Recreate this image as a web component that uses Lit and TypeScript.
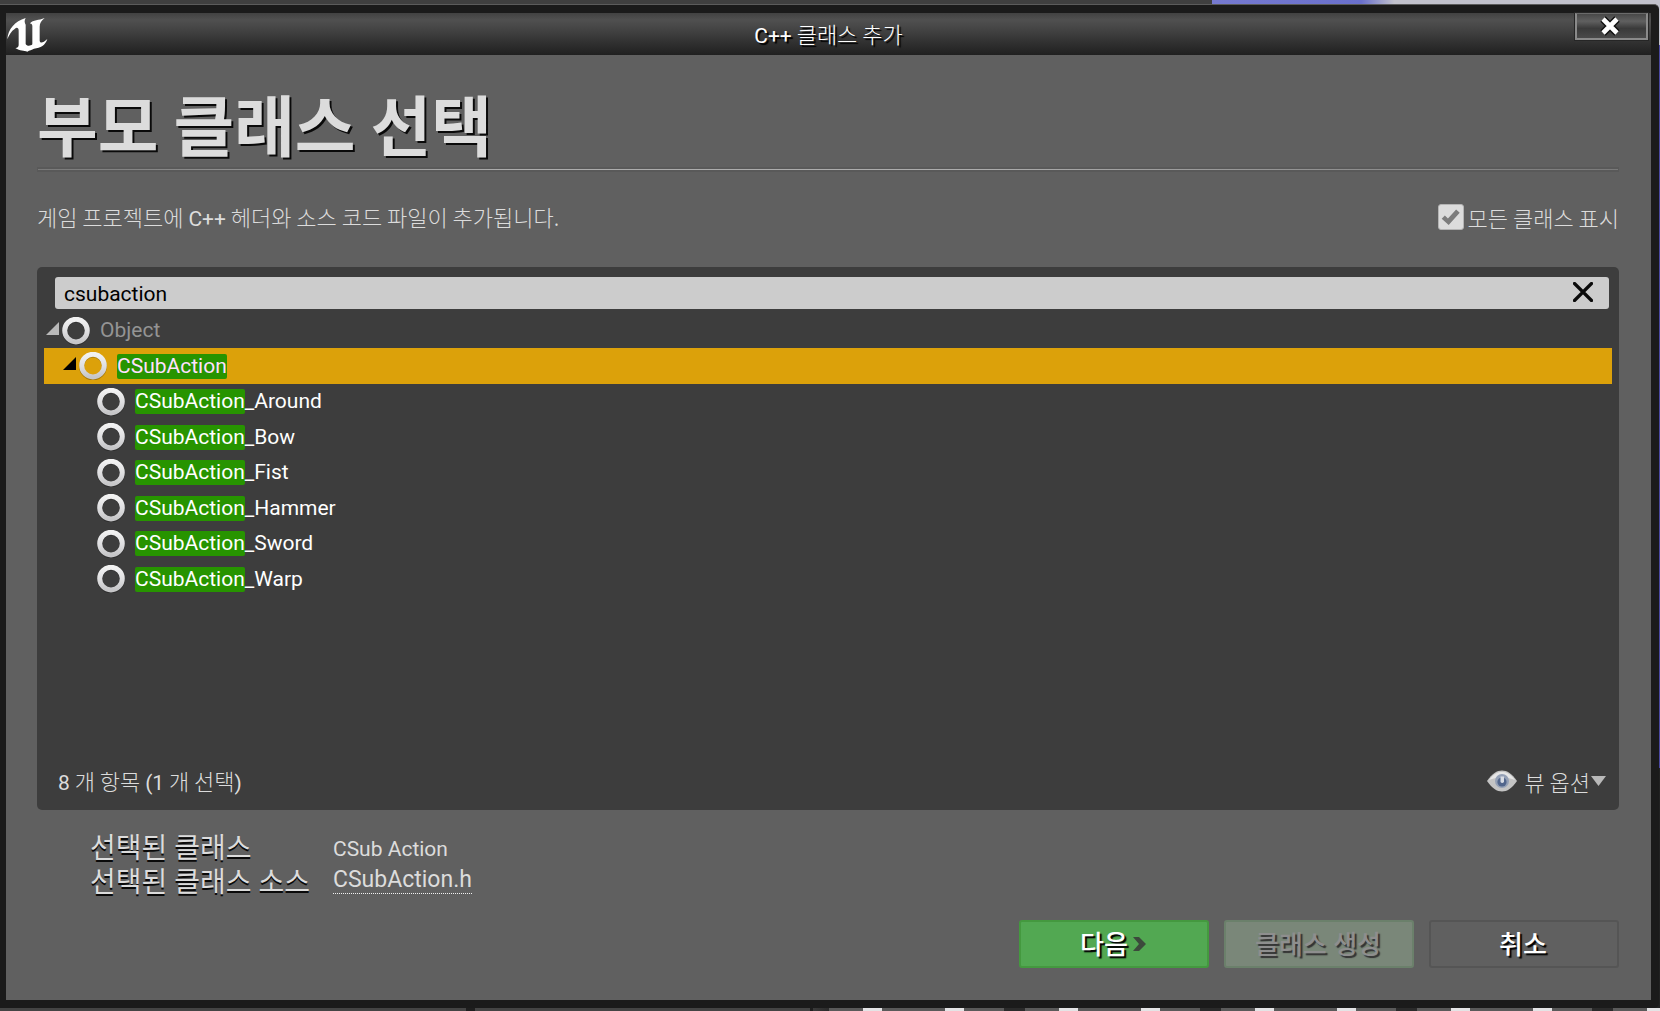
import { LitElement, html, css, svg, nothing } from "lit";
import { customElement, property, state } from "lit/decorators.js";
import { classMap } from "lit/directives/class-map.js";

interface ClassItem {
  name: string;
  depth: number;
  parent: boolean;
}

const CLASSES: ClassItem[] = [
  { name: "Object", depth: 0, parent: true },
  { name: "CSubAction", depth: 1, parent: true },
  { name: "CSubAction_Around", depth: 2, parent: false },
  { name: "CSubAction_Bow", depth: 2, parent: false },
  { name: "CSubAction_Fist", depth: 2, parent: false },
  { name: "CSubAction_Hammer", depth: 2, parent: false },
  { name: "CSubAction_Sword", depth: 2, parent: false },
  { name: "CSubAction_Warp", depth: 2, parent: false },
];

const ringIcon = html`<svg class="ring" viewBox="0 0 28 28" aria-hidden="true">
  ${svg`
    <defs>
      <linearGradient id="g" x1="0" y1="0" x2="0" y2="1">
        <stop offset="0" stop-color="#f2f2f2"></stop>
        <stop offset="0.55" stop-color="#dedee0"></stop>
        <stop offset="1" stop-color="#c6c6c8"></stop>
      </linearGradient>
    </defs>
    <circle cx="14" cy="14.5" r="11.4" fill="none" stroke="#000" stroke-opacity="0.25" stroke-width="5"></circle>
    <circle cx="14" cy="13.6" r="11.3" fill="none" stroke="url(#g)" stroke-width="5"></circle>
  `}
</svg>`;

@customElement("class-row")
export class ClassRow extends LitElement {
  @property({ attribute: false }) item!: ClassItem;
  @property() query = "";
  @property({ type: Boolean }) selected = false;

  static styles = css`
    :host {
      display: block;
      color: #fff;
    }
    .row {
      display: flex;
      align-items: center;
      height: 100%;
      padding-left: 2px;
    }
    .row.selected {
      background: #dca10a;
      color: #ffe0ff;
    }
    .row.muted {
      color: #949494;
    }
    .depth1 {
      padding-left: 19px;
    }
    .depth2 {
      padding-left: 37px;
    }
    .toggle {
      display: flex;
      width: 13px;
      height: 28px;
      padding: 5px 0 0;
      margin-right: 3px;
      border: 0;
      background: none;
      box-sizing: border-box;
      flex: none;
    }
    .toggle.empty {
      visibility: hidden;
    }
    .arrow {
      display: block;
      width: 13px;
      height: 13px;
      fill: #b9b9b9;
    }
    .selected .arrow {
      fill: #000;
    }
    .ring {
      width: 28px;
      height: 28px;
      flex: none;
    }
    .name {
      margin-left: 10px;
      line-height: 25px;
      white-space: nowrap;
    }
    mark {
      display: inline-block;
      background: #279400;
      color: inherit;
      border-radius: 2px;
    }
  `;

  private label() {
    const { name } = this.item;
    const at = name.toLowerCase().indexOf(this.query.toLowerCase());
    if (!this.query || at < 0) return name;
    const end = at + this.query.length;
    return html`${name.slice(0, at)}<mark>${name.slice(at, end)}</mark>${name.slice(end)}`;
  }

  render() {
    const { depth, parent } = this.item;
    return html`<div
      class=${classMap({
        row: true,
        selected: this.selected,
        muted: depth === 0,
        [`depth${depth}`]: true,
      })}
    >
      ${parent
        ? html`<button class="toggle" aria-label="접기">
            <svg class="arrow" viewBox="0 0 13 13"><path d="M13 0V13H0z"></path></svg>
          </button>`
        : html`<span class="toggle empty"></span>`}
      ${ringIcon}
      <span class="name">${this.label()}</span>
    </div>`;
  }
}

@customElement("app-root")
export class AppRoot extends LitElement {
  @state() private query = "csubaction";
  @state() private selected = "CSubAction";

  static styles = css`
    :host {
      display: flex;
      flex-direction: column;
      min-height: 100vh;
      box-sizing: border-box;
      padding: 4px 1px 3px 0;
      font-family: Roboto, "Noto Sans CJK KR", sans-serif;
      font-size: 21px;
      font-weight: 400;
      color: #dcdcdc;
      background:
        linear-gradient(90deg, #404040 73%, #767ad0 73%, #6a70cc 82%, #c2c2cc 84%) top / 100% 5px no-repeat,
        linear-gradient(90deg, #444 466px, #1e1e1e 466px, #1e1e1e 475px, #444 475px, #444 810px, #1e1e1e 810px, #1e1e1e 813px, #3a3a3a 813px, #2a2a2a 829px, transparent 829px) bottom / 100% 3px no-repeat,
        repeating-linear-gradient(90deg, #5a5a5a 0 34px, #e4e4e6 34px 53px, #5a5a5a 53px 116px, #e4e4e6 116px 135px, #5a5a5a 135px 175px, #2a2a2a 175px 196px) 829px 100% / 831px 3px no-repeat,
        linear-gradient(180deg, #c2c2cc 45px, #4a48a0 45px, #4a48a0 76%, #222 76%);
    }
    .window {
      flex: 1;
      display: flex;
      flex-direction: column;
      padding: 8px 8px 8px 6px;
      border-top: 1px solid #5c5c5c;
      border-radius: 0 5px 5px 0;
      background: #1b1b1b;
    }
    .korean {
      font-family: "Noto Sans CJK KR", sans-serif;
      font-size: 22px;
      font-weight: 300;
      line-height: 32px;
    }
    .latin {
      font-family: Roboto, sans-serif;
      font-size: 21px;
      font-weight: 400;
    }
    .titlebar {
      display: grid;
      grid-template-columns: 1fr auto 1fr;
      height: 42px;
      background: linear-gradient(#424242, #505050 16%, #464646 35%, #2e2e2e 75%, #202020);
    }
    .logo {
      width: 42px;
      height: 42px;
    }
    .caption {
      margin: 0;
      padding-top: 4px;
      color: #fff;
      text-shadow: 2px 2px 1px #000;
    }
    .close {
      justify-self: end;
      display: grid;
      place-items: center;
      width: 73px;
      height: 27px;
      margin-right: 3px;
      padding: 0 4px 0 0;
      border: 2px solid #8a8a8a;
      border-top: 1px solid #6a6a6a;
      outline: 1px solid #262626;
      background: linear-gradient(#484848, #606060 30%, #3a3a3a 60%, #4a4a4a);
    }
    .close svg {
      width: 22px;
      height: 20px;
    }
    .body {
      flex: 1;
      display: flex;
      flex-direction: column;
      padding: 28px 32px 32px 31px;
      background: #606060;
    }
    .heading {
      margin: 0;
      padding-bottom: 6px;
      font-family: "Noto Sans CJK KR", sans-serif;
      font-size: 66px;
      font-weight: 700;
      line-height: 78px;
      color: #dcdcdc;
      text-shadow: 2px 2px 0 #0a0a0a;
    }
    .rule {
      height: 1px;
      margin: 0;
      border: 2px solid #595959;
      border-width: 2px 1px;
      background: linear-gradient(90deg, #7a7a7a, #acacac 30%, #acacac 60%, #7a7a7a);
    }
    .intro {
      display: flex;
      justify-content: space-between;
      align-items: center;
      height: 91px;
      padding-bottom: 4px;
    }
    .intro p {
      margin: 0;
    }
    .check {
      display: flex;
      align-items: center;
      gap: 4px;
      line-height: 30px;
      padding-bottom: 1px;
    }
    .check input {
      appearance: none;
      width: 26px;
      height: 26px;
      margin: 0;
      border: 1px solid #b4b4b4;
      border-radius: 3px;
      background: #dcdcdc;
    }
    .check input:checked::after {
      content: "";
      display: block;
      width: 24px;
      height: 24px;
      background: #7c7c7c;
      clip-path: polygon(13% 57%, 26% 44%, 39% 56%, 73% 19%, 88% 32%, 42% 83%);
    }
    .panel {
      flex: 1;
      display: flex;
      flex-direction: column;
      padding: 10px 7px 10px;
      border-radius: 5px;
      background: #3d3d3d;
    }
    .search {
      display: flex;
      align-items: center;
      height: 32px;
      margin: 0 3px 4px 11px;
      border-radius: 3px;
      background: #cccccc;
    }
    .search input {
      flex: 1;
      min-width: 0;
      height: 32px;
      padding: 2px 9px 0;
      border: 0;
      outline: 0;
      background: none;
      box-sizing: border-box;
      font: inherit;
      color: #000;
    }
    .clear {
      display: grid;
      place-items: center;
      width: 32px;
      height: 32px;
      margin-right: 10px;
      padding: 0 0 2px;
      border: 0;
      background: none;
    }
    .clear svg {
      width: 20px;
      height: 20px;
    }
    .tree {
      flex: 1;
      display: grid;
      grid-auto-rows: 35px 36px;
      align-content: start;
    }
    .status {
      display: flex;
      justify-content: space-between;
      align-items: center;
      height: 34px;
      padding: 0 6px 2px 14px;
    }
    .view {
      display: flex;
      align-items: center;
      gap: 7px;
      padding: 0;
      border: 0;
      background: none;
      color: inherit;
    }
    .view .eye {
      width: 30px;
      height: 22px;
    }
    .view .caret {
      width: 15px;
      height: 10px;
      margin-left: -6px;
      fill: #b9b9b9;
    }
    .info {
      display: grid;
      grid-template-columns: auto 1fr;
      grid-auto-rows: 34px;
      column-gap: 23px;
      margin: 22px 0 20px 53px;
    }
    .info dt {
      font-size: 28px;
      font-weight: 400;
      line-height: 34px;
      text-shadow: 0 2px 0 #0a0a0a;
    }
    .info dd {
      display: flex;
      align-items: flex-start;
      margin: 0;
      line-height: 34px;
    }
    .info a {
      border-bottom: 1px dotted #f0f0f0;
      font-size: 23px;
      line-height: 27px;
      color: inherit;
      text-decoration: none;
    }
    .actions {
      display: flex;
      justify-content: flex-end;
      gap: 15px;
    }
    .action {
      display: flex;
      align-items: center;
      justify-content: center;
      gap: 5px;
      width: 190px;
      height: 48px;
      padding: 0 2px 4px 0;
      border: 2px solid #555;
      border-radius: 3px;
      background: #606060;
      font: inherit;
      font-size: 26px;
      font-weight: 500;
      color: #fff;
      text-shadow: 2px 2px 1px #000;
    }
    .action.next {
      border-color: #44993f;
      background: #52a852;
    }
    .action:disabled {
      border-color: #6b806b;
      background: #7a8779;
      color: #8e8e8e;
      text-shadow: 2px 2px 1px #333;
    }
    .next svg {
      width: 13px;
      height: 14px;
      padding-top: 4px;
    }
  `;

  private onInput(e: Event) {
    this.query = (e.target as HTMLInputElement).value;
  }

  private clearQuery() {
    this.query = "";
  }

  render() {
    return html`
      <main class="window">
        <header class="titlebar">
          <svg class="logo" viewBox="18 39 126 126" aria-hidden="true">
            <path
              fill="#fff"
              d="M22 118C24 88 44 64 77 54C72 62 74 68 77 74V132C80 139 92 139 97 133V78C97 73 94 70 89 71C100 58 116 62 134 54C124 62 119 70 119 80V122C120 130 128 130 142 117C136 136 122 144 102 146C96 149 88 151 82 155C72 151 60 153 46 144C54 143 56 140 56 134V92C56 83 50 81 44 87C34 93 28 104 22 118z"
            ></path>
          </svg>
          <h2 class="caption korean"><span class="latin">C++</span> 클래스 추가</h2>
          <button class="close" aria-label="닫기">
            <svg viewBox="0 0 22 20">
              <path d="M4 3L18 17M18 3L4 17" stroke="#111" stroke-width="7.5"></path>
              <path d="M4 3L18 17M18 3L4 17" stroke="#fff" stroke-width="4.6"></path>
            </svg>
          </button>
        </header>
        <div class="body">
          <h1 class="heading">부모 클래스 선택</h1>
          <hr class="rule" />
          <div class="intro korean">
            <p>게임 프로젝트에 <span class="latin">C++</span> 헤더와 소스 코드 파일이 추가됩니다.</p>
            <label class="check"><input type="checkbox" checked />모든 클래스 표시</label>
          </div>
          <section class="panel">
            <div class="search">
              <input type="text" aria-label="검색" spellcheck="false" .value=${this.query} @input=${this.onInput} />
              ${this.query
                ? html`<button class="clear" aria-label="지우기" @click=${this.clearQuery}>
                    <svg viewBox="0 0 20 20">
                      <path d="M1.5 1.5L18.5 18.5M18.5 1.5L1.5 18.5" stroke="#0a0a0a" stroke-width="3.2" stroke-linecap="round"></path>
                    </svg>
                  </button>`
                : nothing}
            </div>
            <div class="tree" role="tree">
              ${CLASSES.map(
                (item) => html`<class-row
                  role="treeitem"
                  aria-selected=${item.name === this.selected}
                  .item=${item}
                  .query=${this.query}
                  .selected=${item.name === this.selected}
                  @click=${() => (this.selected = item.name)}
                ></class-row>`,
              )}
            </div>
            <footer class="status">
              <span class="korean"
                ><span class="latin">8</span> 개 항목 <span class="latin">(1</span> 개 선택<span class="latin">)</span></span
              >
              <button class="view korean">
                <svg class="eye" viewBox="0 0 30 22" aria-hidden="true">
                  <path d="M0 11C5 3.500 10 0.500 15 0.500S25 3.500 30 11C25 18.500 20 21.500 15 21.500S5 18.500 0 11z" fill="#c4c4c4"></path>
                  <path d="M2 10C7 3.500 11 2 15 2S23 3.500 28 10C21 7 9 7 2 10z" fill="#e6e6e6"></path>
                  <circle cx="15" cy="11" r="7" fill="#94a0b6"></circle>
                  <circle cx="15" cy="12" r="4.600" fill="#52668c"></circle>
                  <path d="M13.500 6.500H17V12Q15.200 14 13.500 12z" fill="#d8dce4"></path>
                </svg>
                뷰 옵션
                <svg class="caret" viewBox="0 0 15 10" aria-hidden="true"><path d="M0 0H15L7.500 10z"></path></svg>
              </button>
            </footer>
          </section>
          <dl class="info">
            <dt>선택된 클래스</dt>
            <dd>CSub Action</dd>
            <dt>선택된 클래스 소스</dt>
            <dd><a href="#CSubAction.h">CSubAction.h</a></dd>
          </dl>
          <div class="actions">
            <button class="action next">
              다음
              <svg viewBox="0 0 13 14" aria-hidden="true"><path d="M0 0H6L13 7L6 14H0L6 7z" fill="#3c4a3c"></path></svg>
            </button>
            <button class="action" disabled>클래스 생성</button>
            <button class="action">취소</button>
          </div>
        </div>
      </main>
    `;
  }
}
